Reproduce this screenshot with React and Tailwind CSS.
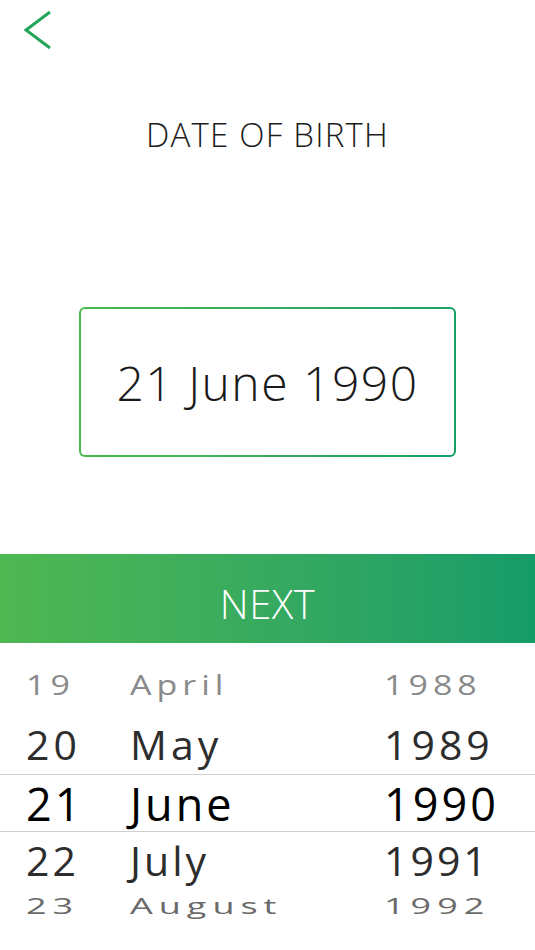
import { useState } from 'react';

const font = { fontFamily: '"Open Sans", "DejaVu Sans", sans-serif' };

// wheel rows, top to bottom
const rows = [
  { d: '19', m: 'April', y: '1988', cls: 'h-[58px] text-[34px] text-[#8a8a8a] scale-y-[0.8] tracking-[5px]' },
  { d: '20', m: 'May', y: '1989', cls: 'h-[60px] text-[41px] text-[#2d2d2d] tracking-[4px]' },
  { d: '21', m: 'June', y: '1990', cls: 'h-[58px] text-[45px] text-black tracking-[3px]', active: true },
  { d: '22', m: 'July', y: '1991', cls: 'h-[56px] text-[41px] text-[#2d2d2d] tracking-[3px]' },
  { d: '23', m: 'August', y: '1992', cls: 'h-[36px] text-[36px] text-[#6a6a6a] scale-y-[0.6] tracking-[6px]' },
];

function Chevron() {
  return (
    <svg width="34" height="40" viewBox="0 0 34 40" fill="none">
      <path d="M29 2 L5 20 L29 38" stroke="#23a55a" strokeWidth="3" />
    </svg>
  );
}

export default function App() {
  const [date] = useState({ d: 21, m: 'June', y: 1990 });

  return (
    <div className="w-[535px] h-[950px] bg-white overflow-hidden flex flex-col" style={font}>
      <div className="pl-[21px] pt-[10px] h-[56px]">
        <Chevron />
      </div>

      <h1 className="mt-[62px] text-center text-[33px] leading-none text-[#1c1c1c] font-light tracking-[1.2px]">
        DATE OF BIRTH
      </h1>

      <div className="mt-[156px] mx-auto w-[377px] h-[150px] rounded-[6px] p-[2px] bg-gradient-to-r from-[#4cb84f] to-[#15a068]">
        <div className="w-full h-full rounded-[4px] bg-white flex items-center justify-center pt-[2px]">
          <span className="text-[48px] text-[#1a1a1a] font-light leading-none tracking-[1.5px]">
            {date.d} {date.m} {date.y}
          </span>
        </div>
      </div>

      <button className="mt-[97px] h-[89px] w-full bg-gradient-to-r from-[#4fb852] to-[#159c69] text-white text-[40px] font-light leading-none flex items-center justify-center pt-[10px] tracking-[0.5px]">
        NEXT
      </button>

      <div className="pt-[13px] flex flex-col">
        {rows.map((r) => (
          <div
            key={r.d}
            className={
              'grid grid-cols-[104px_254px_1fr] items-center pl-[26px] font-normal leading-none ' +
              r.cls +
              (r.active ? ' border-y border-[#d0d0d0]' : '')
            }
          >
            <span>{r.d}</span>
            <span>{r.m}</span>
            <span>{r.y}</span>
          </div>
        ))}
      </div>
    </div>
  );
}
